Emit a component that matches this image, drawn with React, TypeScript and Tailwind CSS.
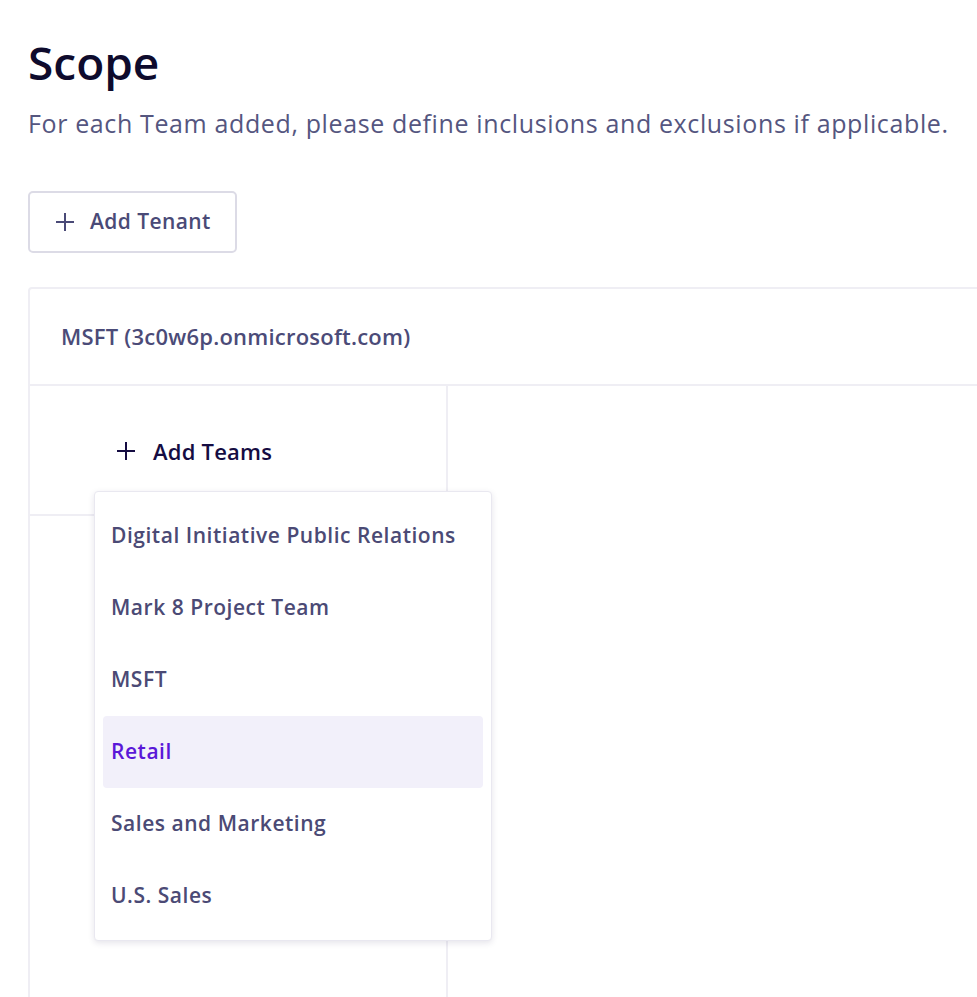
const teams = [
  "Digital Initiative Public Relations",
  "Mark 8 Project Team",
  "MSFT",
  "Retail",
  "Sales and Marketing",
  "U.S. Sales",
];

function PlusIcon({ className }: { className?: string }) {
  return (
    <svg viewBox="0 0 18 18" className={className} fill="none" stroke="currentColor" strokeWidth={2}>
      <path d="M9 0v18M0 9h18" />
    </svg>
  );
}

export default function App() {
  const active = "Retail";
  return (
    <div
      className="h-[997px] overflow-hidden bg-white pl-[28px] pt-[34px]"
      style={{ fontFamily: '"Open Sans", "Noto Sans", sans-serif' }}
    >
      <h1 className="text-[46px] leading-[56px] font-semibold text-[#0e0b2d]">Scope</h1>
      <p className="mt-[17px] text-[25px] leading-[32px] tracking-[0.025em] text-[#55567f]">
        For each Team added, please define inclusions and exclusions if applicable.
      </p>

      <button className="mt-[52px] flex h-[62px] w-[209px] items-center gap-[16px] rounded-[5px] border-2 border-[#dcdbe6] pl-[26px] text-[21px] font-semibold tracking-[0.02em] text-[#4a4a77]">
        <PlusIcon className="h-[18px] w-[18px]" />
        Add Tenant
      </button>

      <div className="mt-[34px] w-[980px] rounded-tl-[4px] border-2 border-[#efeef4]">
        <div className="flex h-[97px] items-center border-b-2 border-[#efeef4] pl-[31px] text-[22px] font-semibold tracking-[0.01em] text-[#4b4b78]">
          MSFT (3c0w6p.onmicrosoft.com)
        </div>
        <div className="flex h-[620px]">
          <div className="w-[418px] border-r-2 border-[#efeef4]">
            <div className="relative h-[130px] border-b-2 border-[#efeef4]">
              <div className="flex h-full items-center gap-[18px] pt-[2px] pl-[87px] text-[22px] font-semibold tracking-[0.01em] text-[#150c42]">
                <PlusIcon className="h-[18px] w-[18px]" />
                Add Teams
              </div>
              <div className="absolute left-[64px] top-[105px] z-10 w-[398px] rounded-[4px] border border-[#e9e8f0] bg-white p-[8px] shadow-[0_2px_6px_rgba(40,36,80,0.12)]">
                {teams.map((t) => (
                  <div
                    key={t}
                    className={
                      t === active
                        ? "flex h-[72px] items-center rounded-[4px] bg-[#f2f0fa] px-[8px] text-[21px] font-semibold tracking-[0.025em] text-[#5a17d8]"
                        : "flex h-[72px] items-center rounded-[4px] px-[8px] text-[21px] font-semibold tracking-[0.025em] text-[#4b4a75]"
                    }
                  >
                    {t}
                  </div>
                ))}
              </div>
            </div>
          </div>
          <div className="flex-1" />
        </div>
      </div>
    </div>
  );
}
